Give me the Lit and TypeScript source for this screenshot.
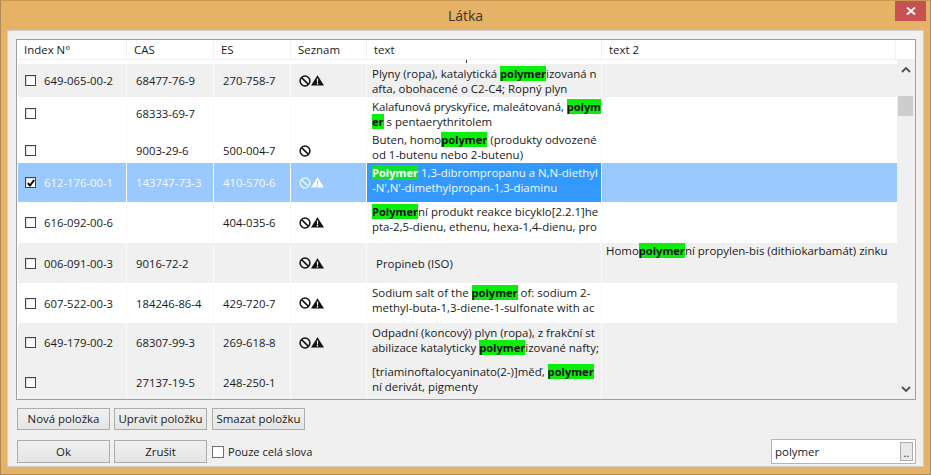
import { LitElement, html, css, TemplateResult } from "lit";
import { customElement } from "lit/decorators.js";

type Row = {
  h: number; bg: "w" | "g" | "s"; check?: boolean; idx: string; cas: string; es: string;
  icons: "" | "b" | "bw"; text: TemplateResult | string; text2?: TemplateResult | string; low?: boolean; mid?: boolean;
};
const P = (s: string) => html`<b class="hl">${s}</b>`;
const rows: Row[] = [
  { h: 33, bg: "g", idx: "649-065-00-2", cas: "68477-76-9", es: "270-758-7", icons: "bw",
    text: html`<div>Plyny (ropa), katalytická ${P("polymer")}izovaná n</div><div>afta, obohacené o C2-C4; Ropný plyn</div>` },
  { h: 33, bg: "w", idx: "", cas: "68333-69-7", es: "", icons: "",
    text: html`<div class="tight">Kalafunová pryskyřice, maleátovaná, ${P("polym")}</div><div>${P("er")} s pentaerythritolem</div>` },
  { h: 33, bg: "w", low: true, idx: "", cas: "9003-29-6", es: "500-004-7", icons: "b",
    text: html`<div>Buten, homo${P("polymer")} (produkty odvozené</div><div>od 1-butenu nebo 2-butenu)</div>` },
  { h: 39, bg: "s", check: true, idx: "612-176-00-1", cas: "143747-73-3", es: "410-570-6", icons: "bw",
    text: html`<div>${P("Polymer")} 1,3-dibrompropanu a N,N-diethyl</div><div>-N',N'-dimethylpropan-1,3-diaminu</div>` },
  { h: 41, bg: "w", idx: "616-092-00-6", cas: "", es: "404-035-6", icons: "bw",
    text: html`<div>${P("Polymer")}ní produkt reakce bicyklo[2.2.1]he</div><div>pta-2,5-dienu, ethenu, hexa-1,4-dienu, pro</div>` },
  { h: 40, bg: "g", mid: true, idx: "006-091-00-3", cas: "9016-72-2", es: "", icons: "bw",
    text: html`<div class="pad">Propineb (ISO)</div>`,
    text2: html`<div>Homo${P("polymer")}ní propylen-bis (dithiokarbamát) zinku</div>` },
  { h: 40, bg: "w", idx: "607-522-00-3", cas: "184246-86-4", es: "429-720-7", icons: "bw",
    text: html`<div>Sodium salt of the ${P("polymer")} of: sodium 2-</div><div>methyl-buta-1,3-diene-1-sulfonate with ac</div>` },
  { h: 39, bg: "g", idx: "649-179-00-2", cas: "68307-99-3", es: "269-618-8", icons: "bw",
    text: html`<div>Odpadní (koncový) plyn (ropa), z frakční st</div><div>abilizace katalyticky ${P("polymer")}izované nafty;</div>` },
  { h: 41, bg: "g", idx: "", cas: "27137-19-5", es: "248-250-1", icons: "",
    text: html`<div>[triaminoftalocyaninato(2-)]měď, ${P("polymer")}</div><div>ní derivát, pigmenty</div>` },
];

const ban = html`<svg class="ic" viewBox="0 0 12 12" width="12" height="12"><circle cx="6" cy="6" r="4.9" fill="none" stroke="currentColor" stroke-width="1.5"/><path d="M2.6 2.6 9.4 9.4" stroke="currentColor" stroke-width="1.5"/></svg>`;
const warn = (bg: string) => html`<svg class="ic warn" viewBox="0 0 13 11" width="13" height="11"><path d="M6.5 .2 13 10.6H0Z" fill="currentColor"/><path d="M5.8 3.6h1.4l-.2 3.8H6ZM5.8 8h1.4v1.4H5.8Z" fill="${bg}"/></svg>`;

@customElement("app-root")
export class AppRoot extends LitElement {
  static styles = css`
    :host { display: block; width: 931px; height: 475px; overflow: hidden; font-family: "Open Sans", "Noto Sans", sans-serif; font-size: 11.45px; color: #1a1a1a; }
    .win { box-sizing: border-box; width: 931px; height: 475px; background: #e6b265; border: 1px solid #b08a50; border-top-color: #c89a55; display: flex; flex-direction: column; padding: 0 6px 7px; }
    .title { height: 29px; flex: none; display: flex; align-items: center; justify-content: center; font-size: 14px; color: #3f3424; position: relative; }
    .close { position: absolute; right: -2px; top: 0; width: 31px; height: 20px; background: #c75050; display: flex; align-items: center; justify-content: center; }
    .body { flex: 1; background: #f0f0f0; border: 1px solid #cfcfcf; box-sizing: border-box; padding: 8px 7px 0 8px; display: flex; flex-direction: column; min-height: 0; }
    .table { box-sizing: border-box; width: 900px; height: 361px; border: 1px solid #a0a0a0; background: #fff; position: relative; overflow: hidden; flex: none; }
    .row { display: grid; grid-template-columns: 110px 87px 77px 76px 235px 294px 19px; }
    .row.data { grid-template-columns: 109px 87px 77px 76px 235px 294px 19px; margin-left: 1px; }
    .head { height: 20px; background: #fff; border-bottom: 1px solid #f0f0f0; box-sizing: border-box; }
    .head > div { padding: 0 0 0 7px; display: flex; align-items: center; border-right: 1px solid #f0f0f0; }
    .head > div:last-child { border-right: none; }
    .stub { height: 4px; overflow: hidden; }
    .tick { margin-left: 449px; width: 1px; height: 3px; background: #333; }
    .cell { display: flex; align-items: center; border-right: 1px solid #fafafa; padding-left: 9px; box-sizing: border-box; min-width: 0; white-space: nowrap; overflow: hidden; font-size: 11.3px; }
    .first { padding-left: 7px; }
    .col-text { display: flex; align-items: flex-start; padding: 2px 0 0 5px; border-right: 1px solid #fafafa; box-sizing: border-box; overflow: hidden; line-height: 15px; white-space: nowrap; }
    .col-text.mid { align-items: center; padding-top: 0; }
    .tight { letter-spacing: -0.07px; }
    .col-t2 { padding: 0 0 0 4px; line-height: 15px; box-sizing: border-box; white-space: nowrap; overflow: hidden; }
    .r-g { background: #f0f0f0; }
    .r-w { background: #fff; }
    .r-s { background: #99c9ff; color: #f6faff; }
    .r-s .cell, .r-s .col-text, .r-s .icons { border-right-color: #fff; }
    .r-s .col-text { background: #3399ff; }
    .low .cell, .low .icons { padding-top: 8px; }
    .hl { background: #0bee0b; font-weight: 700; color: #111; font-size: 11.1px; }
    .r-s .hl { color: #fff; background: #12de30; }
    .pad { padding-left: 4px; }
    .box { width: 9px; height: 9px; border: 1px solid #444; background: #fff; margin-right: 8px; flex: none; display: flex; align-items: center; justify-content: center; box-shadow: inset 1px 1px 0 #e0e0e0; }
    .ic { display: block; flex: none; color: #111; }
    .r-s .ic { color: #e6f2ff; }
    .r-s .warn { color: #fff; }
    .icons { display: flex; align-items: center; padding-left: 8px; border-right: 1px solid #fafafa; box-sizing: border-box; }
    .sb { position: absolute; right: 0; top: 20px; bottom: 0; width: 18px; background: #f0f0f0; }
    .thumb { position: absolute; left: 1px; top: 36px; width: 15px; height: 20px; background: #cdcdcd; }
    .ar { position: absolute; left: 4px; width: 10px; height: 7px; }
    .btns { display: flex; margin: 8px 0 0 1px; height: 22px; flex: none; }
    .btn { box-sizing: border-box; height: 100%; width: 93px; border: 1px solid #acacac; background: linear-gradient(#f0f0f0, #e5e5e5); display: flex; align-items: center; justify-content: center; color: #1a1a1a; padding-bottom: 1px; }
    .gap4 { margin-left: 4px; }
    .gap5 { margin-left: 5px; }
    .foot { display: flex; align-items: center; margin-top: 9px; height: 25px; flex: none; width: 900px; padding-left: 1px; box-sizing: border-box; }
    .foot .btn { height: 23px; }
    .cb2 { width: 10px; height: 10px; border: 1px solid #707070; background: #fff; margin: 0 4px 0 5px; }
    .lbl { font-size: 11.1px; }
    .search { margin-left: auto; box-sizing: border-box; width: 145px; height: 25px; border: 1px solid #b4b4b4; background: #fff; display: flex; align-items: center; justify-content: space-between; padding: 0 2px 0 3px; }
    .dots { box-sizing: border-box; width: 13px; height: 19px; border: 1px solid #acacac; background: #e8e8e8; display: flex; align-items: flex-end; justify-content: center; font-size: 11px; line-height: 14px; }
  `;

  private iconCell(r: Row) {
    const bg = r.bg === "s" ? "#99c9ff" : r.bg === "g" ? "#f0f0f0" : "#fff";
    return html`<div class="icons">${r.icons ? ban : ""}${r.icons === "bw" ? warn(bg) : ""}</div>`;
  }

  render() {
    return html`<div class="win">
      <div class="title">Látka
        <div class="close"><svg width="10" height="8" viewBox="0 0 10 8"><path d="M1 .6 9 7.4M9 .6 1 7.4" stroke="#fff" stroke-width="2"/></svg></div>
      </div>
      <div class="body">
        <div class="table">
          <div class="row head"><div>Index N°</div><div>CAS</div><div>ES</div><div>Seznam</div><div>text</div><div>text 2</div><div></div></div>
          <div class="stub"><div class="tick"></div></div>
          ${rows.map((r) => html`<div class="row data r-${r.bg} ${r.low ? "low" : ""}" style="height:${r.h}px">
            <div class="cell first"><span class="box">${r.check ? html`<svg width="8" height="8" viewBox="0 0 8 8"><path d="M.8 4 3 6.5 7.2 1" fill="none" stroke="#000" stroke-width="1.9"/></svg>` : ""}</span>${r.idx}</div>
            <div class="cell">${r.cas}</div>
            <div class="cell">${r.es}</div>
            ${this.iconCell(r)}
            <div class="col-text ${r.mid ? "mid" : ""}"><div>${r.text}</div></div>
            <div class="col-t2">${r.text2 ?? ""}</div>
            <div></div>
          </div>`)}
          <div class="sb">
            <svg class="ar" style="top:6px" viewBox="0 0 10 7"><path d="M1 6 5 2 9 6" fill="none" stroke="#505050" stroke-width="1.8"/></svg>
            <div class="thumb"></div>
            <svg class="ar" style="bottom:6px" viewBox="0 0 10 7"><path d="M1 1 5 5 9 1" fill="none" stroke="#505050" stroke-width="1.8"/></svg>
          </div>
        </div>
        <div class="btns"><div class="btn">Nová položka</div><div class="btn gap4">Upravit položku</div><div class="btn gap5">Smazat položku</div></div>
        <div class="foot">
          <div class="btn">Ok</div><div class="btn gap4">Zrušit</div>
          <div class="cb2"></div><div class="lbl">Pouze celá slova</div>
          <div class="search"><span>polymer</span><span class="dots">..</span></div>
        </div>
      </div>
    </div>`;
  }
}
